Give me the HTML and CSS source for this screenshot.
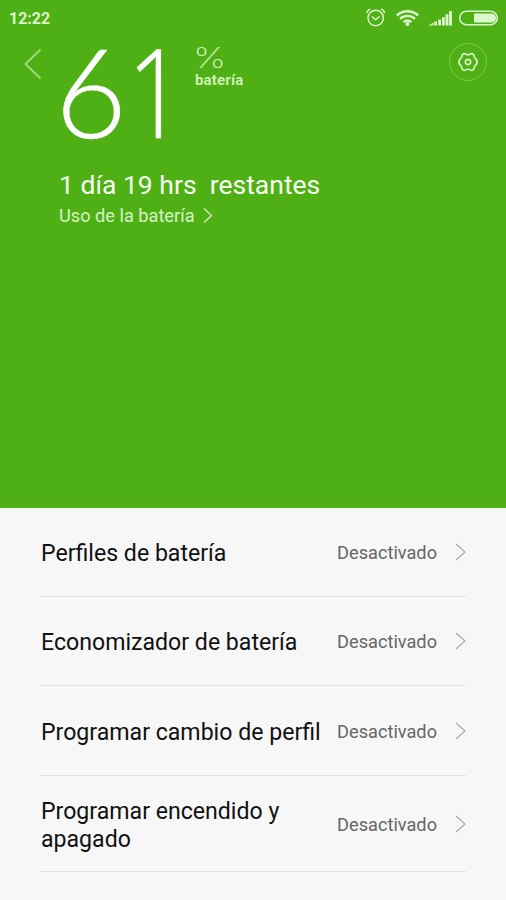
FILE: index.html
```html
<!DOCTYPE html>
<html lang="es">
<head>
<meta charset="utf-8">
<title>Batería</title>
<link rel="stylesheet" href="styles.css">
</head>
<body>
<header class="hero">
  <div class="status">
    <span class="clock">12:22</span>
    <svg class="status-icons" width="136" height="24" viewBox="0 0 136 24" fill="none" stroke="#dcf6ce">
      <g stroke-width="1.500"><circle cx="10.700" cy="13" r="7.700"/><path d="M7 11.500l3.600 3.200 4-3.200M1.800 8A6 6 0 0 1 5.300 4M16.200 4a6 6 0 0 1 3.500 4"/></g>
      <g stroke-width="2.400"><path d="M31.800 10.500c6-5.600 15.400-5.600 21.400 0M35 13.900c4.400-4 10.600-4 15 0M38.500 17.200c2.500-2.100 5.500-2.100 8 0"/></g>
      <circle cx="42.500" cy="19" r="2" fill="#dcf6ce" stroke="none"/>
      <path stroke-width="2.800" d="M70.700 20.500v-4M74.600 20.500v-6M78.400 20.500v-8.200M82 20.500V9.300M85.500 20.500V6"/>
      <path fill="#dcf6ce" stroke="none" d="M63.500 20.500l5-3V20.500z"/>
      <rect x="94.700" y="6.200" width="37.600" height="13.600" rx="6.800" stroke-width="1.500"/>
      <path fill="#dcf6ce" stroke="none" d="M109 8.500h17.500a4.500 4.500 0 0 1 0 9H109z"/>
    </svg>
  </div>
  <div class="summary">
    <svg class="back" width="20" height="34" viewBox="0 0 20 34" fill="none" stroke="#a6da87" stroke-width="1.900"><path d="M17.500 2.500L2.500 17l15 14.500"/></svg>
    <div class="level"><span class="six">6</span><span class="one">1</span></div>
    <div class="unit"><span class="percent">%</span><span class="unit-name">batería</span></div>
    <svg class="settings" width="40" height="40" viewBox="0 0 40 40" fill="none">
      <circle cx="20" cy="20" r="18.500" stroke="#7cca51"/>
      <g stroke="#dcf6ce" stroke-width="1.600" stroke-linejoin="round"><path d="M15.500 11.700Q17.300 11.500 18 12.200Q20 13.400 22 12.200Q22.700 11.500 24.500 11.700Q26 12.500 26.100 14Q26.200 16 28.300 17.500Q29.900 20 28.300 22.500Q26.200 24 26.100 26Q26 27.500 24.500 28.300Q22.700 28.500 22 27.800Q20 26.600 18 27.800Q17.300 28.500 15.500 28.300Q14 27.500 13.900 26Q13.800 24 11.700 22.500Q10.100 20 11.700 17.500Q13.800 16 13.900 14Q14 12.500 15.500 11.700z"/><circle cx="20" cy="20" r="2.600"/></g>
    </svg>
  </div>
  <div class="remaining">1 día 19 hrs&nbsp; restantes</div>
  <div class="usage"><span>Uso de la batería</span><svg width="10" height="18" viewBox="0 0 10 18" fill="none" stroke="#d6f3c5" stroke-width="1.200"><path d="M1 1.500l7.500 7L1 15.500"/></svg></div>
</header>
<main class="list">
  <div class="row"><span class="name">Perfiles de batería</span><span class="value">Desactivado</span><svg class="chevron" viewBox="0 0 12 18"><path d="M2 1l9 8-9 8"/></svg></div>
  <div class="row"><span class="name">Economizador de batería</span><span class="value">Desactivado</span><svg class="chevron" viewBox="0 0 12 18"><path d="M2 1l9 8-9 8"/></svg></div>
  <div class="row"><span class="name">Programar cambio de perfil</span><span class="value">Desactivado</span><svg class="chevron" viewBox="0 0 12 18"><path d="M2 1l9 8-9 8"/></svg></div>
  <div class="row tall"><span class="name">Programar encendido y<br>apagado</span><span class="value">Desactivado</span><svg class="chevron" viewBox="0 0 12 18"><path d="M2 1l9 8-9 8"/></svg></div>
</main>
</body>
</html>
```
FILE: styles.css
```css
* { box-sizing: border-box; }
body { margin: 0; width: 506px; height: 900px; overflow: hidden; background: #f7f7f7; font-family: Roboto, sans-serif; }
svg { display: block; flex: none; }
.hero { height: 508px; background: #4fb015; color: #fff; }
.status { height: 36px; display: flex; align-items: center; justify-content: space-between; padding: 0 5px 0 9px; }
.clock { font-size: 16px; font-weight: 700; color: #dcf6ce; }
.status-icons { margin-top: -2px; }
.summary { height: 130px; display: flex; align-items: flex-start; padding: 6px 18px 0 23px; }
.back { margin-top: 5px; }
.level { display: flex; width: 140px; height: 96px; margin-left: 12px; line-height: 96px; font-size: 124px; -webkit-text-stroke: .4px #fff; }
.six { font-family: Lato, sans-serif; font-weight: 300; width: 72px; }
.one { font-family: "Open Sans", sans-serif; font-weight: 300; width: 58px; transform: scaleX(.82); transform-origin: left; }
.unit { display: flex; flex-direction: column; flex: 1; color: #cdefb8; }
.percent { width: 24px; font-family: Inter, sans-serif; font-weight: 200; font-size: 28px; line-height: 32px; margin-left: -2px; transform: scaleX(1.330); transform-origin: left; }
.unit-name { font-size: 15px; font-weight: 700; line-height: 12px; letter-spacing: .15px; }
.remaining { margin-left: 59px; margin-top: 3px; font-size: 26.500px; line-height: 32px; height: 32px; color: #f7fff2; white-space: nowrap; }
.usage { display: flex; align-items: center; gap: 8px; margin: 1px 0 0 59px; font-size: 18.200px; line-height: 28px; color: #d6f3c5; }
.list { padding: 0 40px; }
.row { height: 89px; display: flex; align-items: center; border-bottom: 1px solid #e2e2e2; }
.row:nth-child(3) { height: 90px; }
.row.tall { height: 96px; }
.name { flex: 1; margin: 2px 0 0 1px; font-size: 24px; line-height: 28px; color: #111; white-space: nowrap; transform: scaleX(.963); transform-origin: left; }
.value { margin-top: 1px; font-size: 18.200px; color: #666; }
.chevron { width: 12px; height: 18px; margin-left: 17px; fill: none; stroke: #aaa; stroke-width: 1.200; }
```
